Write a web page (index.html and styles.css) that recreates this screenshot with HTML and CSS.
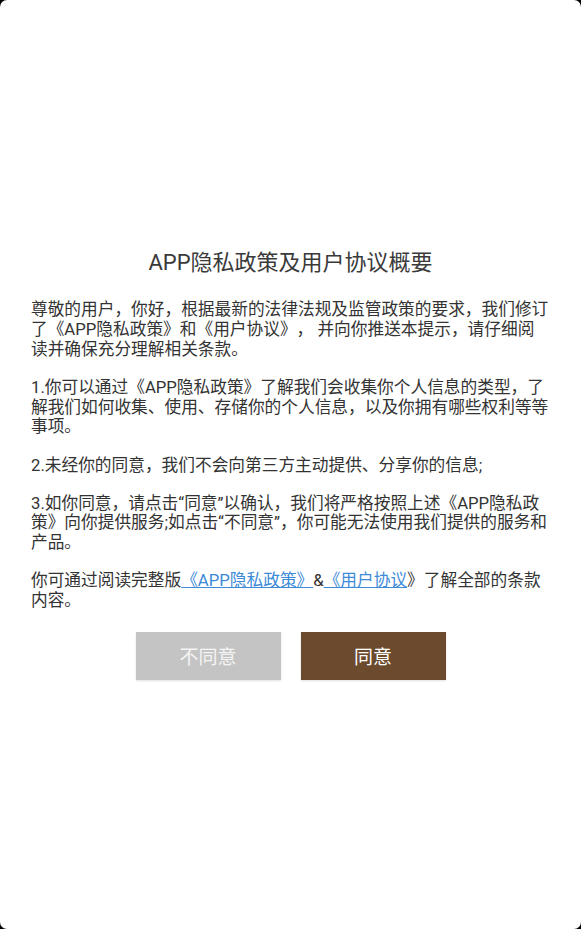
FILE: index.html
```html
<!DOCTYPE html>
<html lang="zh-CN">
<head>
    <meta charset="UTF-8">
    <meta name="viewport" content="width=device-width, initial-scale=1.0">
    <title>APP隐私政策及用户协议概要</title>
    <link rel="stylesheet" href="styles.css">
</head>
<body>
    <div class="dialog">
        <h1 class="title">APP隐私政策及用户协议概要</h1>

        <div class="content">
            <p>尊敬的用户，你好，根据最新的法律法规及监管政策的要求，我们修订了《APP隐私政策》和《用户协议》， 并向你推送本提示，请仔细阅读并确保充分理解相关条款。</p>
            <p>1.你可以通过《APP隐私政策》了解我们会收集你个人信息的类型，了解我们如何收集、使用、存储你的个人信息，以及你拥有哪些权利等等事项。</p>
            <p>2.未经你的同意，我们不会向第三方主动提供、分享你的信息;</p>
            <p>3.如你同意，请点击“同意”以确认，我们将严格按照上述《APP隐私政策》向你提供服务;如点击“不同意”，你可能无法使用我们提供的服务和产品。</p>
            <p>你可通过阅读完整版<a href="#" class="link">《APP隐私政策》</a>&amp;<a href="#" class="link">《用户协议</a>》了解全部的条款内容。</p>
        </div>

        <div class="actions">
            <button class="btn btn-refuse">不同意</button>
            <button class="btn btn-agree">同意</button>
        </div>
    </div>
</body>
</html>
```

FILE: styles.css
```css
body {
    margin: 0;
    background: #000;
    font-family: Roboto, "Noto Sans CJK SC", sans-serif;
    color: #333;
    /* keep full-width punctuation, like the app webview */
    text-spacing-trim: space-all;
}

/* white sheet with rounded corners over the black screen */
.dialog {
    min-height: 100vh;
    background: #fff;
    border-radius: 7px;
    display: flex;
    flex-direction: column;
    justify-content: center;
    box-sizing: border-box;
    padding-bottom: 1px;
}

.title {
    margin: 0 0 22px;
    font-size: 22px;
    font-weight: normal;
    line-height: 30px;
    text-align: center;
    color: #3a3a3a;
}

.content {
    padding: 0 31px;
    font-size: 16.7px;
    line-height: 19.7px;
}

.content p {
    margin: 0 0 18.5px;
}

.content p:last-child {
    margin-bottom: 0;
}

.link {
    color: #3d8ad6;
    text-decoration: underline;
}

.actions {
    margin-top: 21px;
    display: flex;
    justify-content: center;
    gap: 20px;
}

.btn {
    width: 145px;
    height: 48px;
    border: none;
    border-radius: 0;
    font-family: Roboto, "Noto Sans CJK SC", sans-serif;
    font-size: 19px;
    color: #fff;
    box-shadow: 0 1px 2px rgba(0, 0, 0, 0.12);
    cursor: pointer;
}

.btn-refuse {
    background: #c4c4c4;
    color: #f4f4f4;
}

.btn-agree {
    background: #6b4a2d;
}
```
